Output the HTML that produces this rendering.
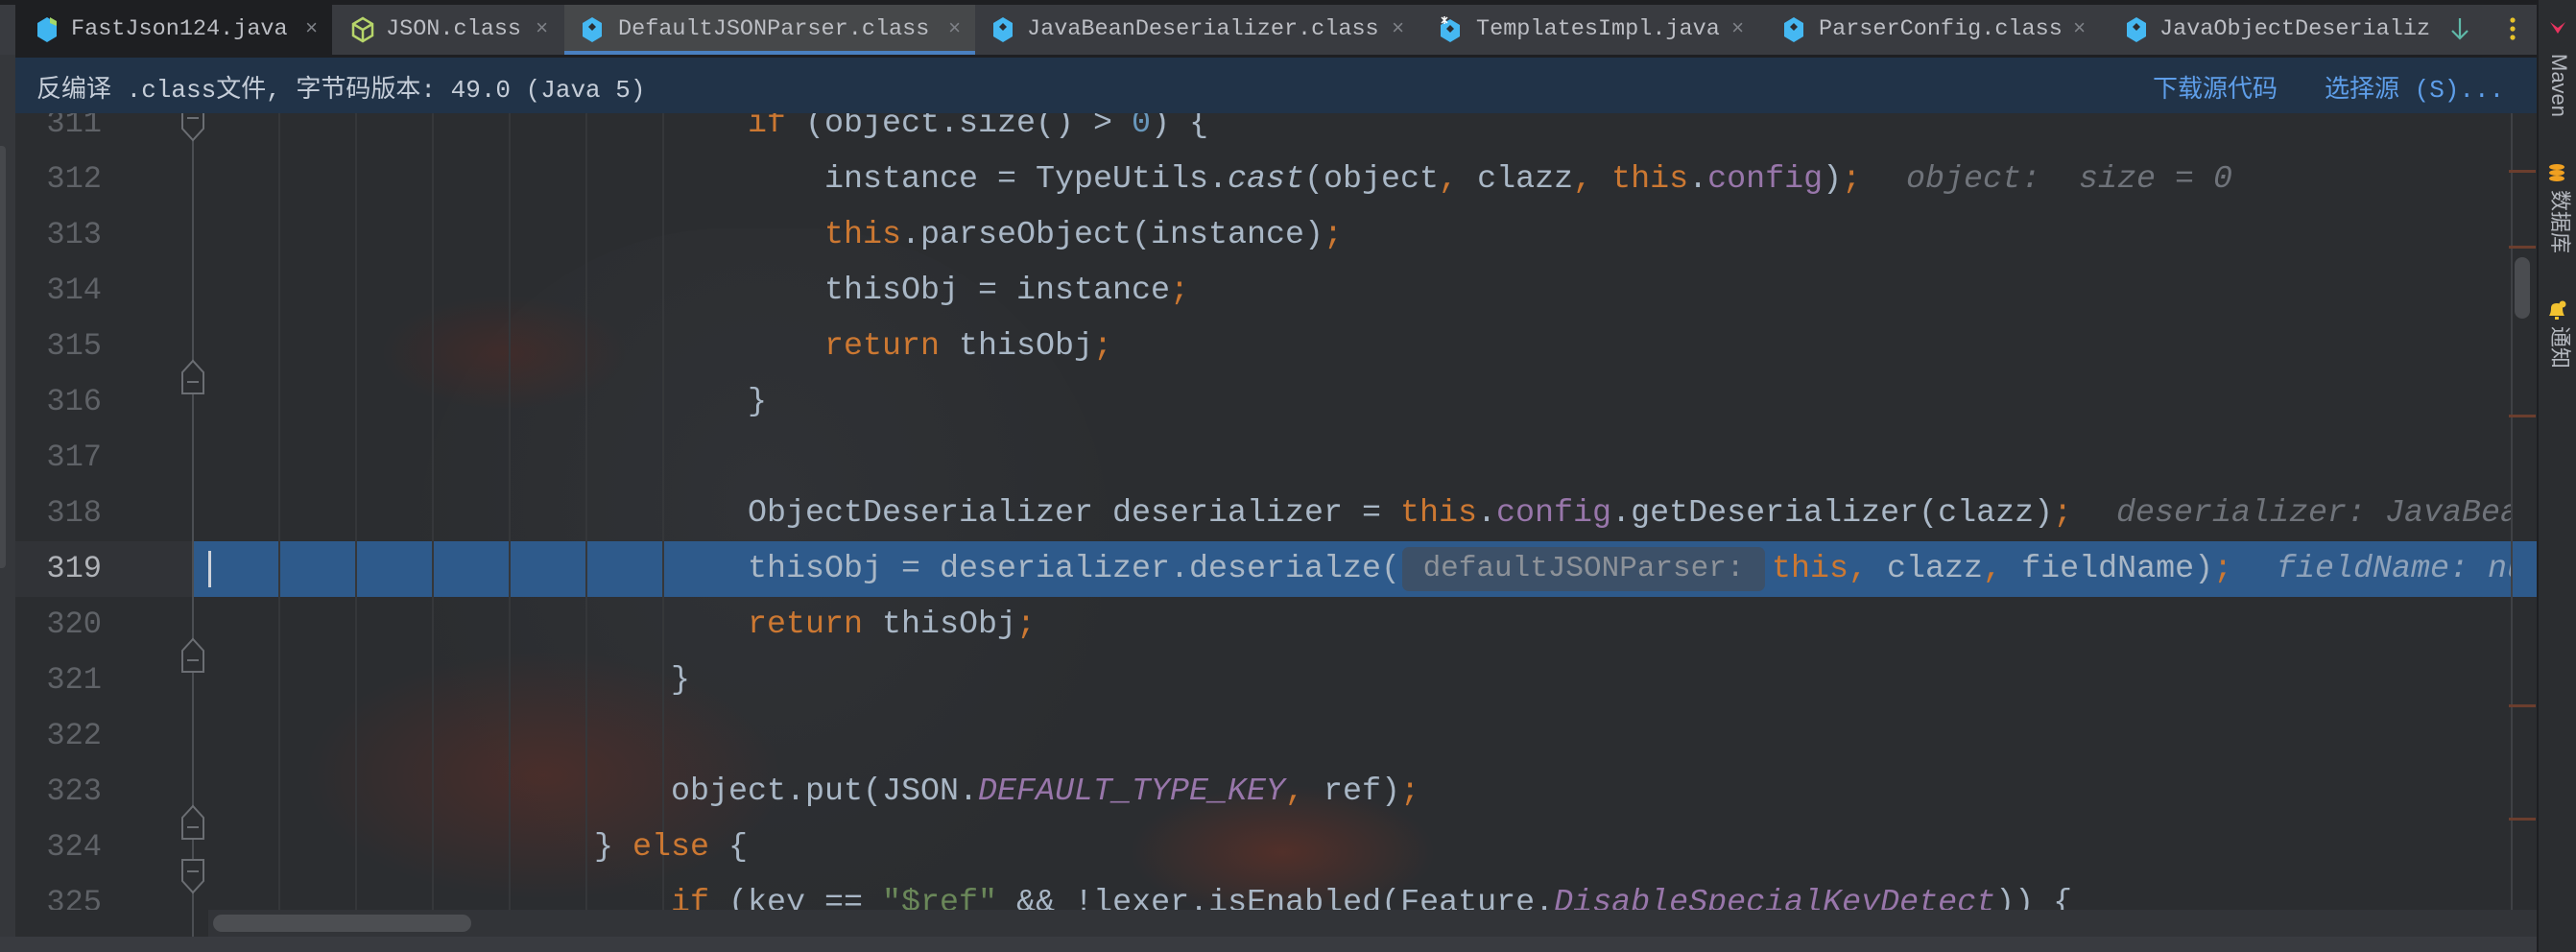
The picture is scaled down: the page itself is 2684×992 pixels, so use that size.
<!DOCTYPE html>
<html><head><meta charset="utf-8"><style>
*{margin:0;padding:0;box-sizing:border-box}
body{width:2684px;height:992px;overflow:hidden;background:#2b2d30;position:relative;font-family:"Liberation Mono","Noto Sans CJK SC",monospace}
.abs{position:absolute}
#topline{left:0;top:0;width:2684px;height:5px;background:#1e1f22}
#tabs{left:0;top:5px;width:2643px;height:52px;background:#393b40}
.tab{position:absolute;top:0;height:52px;font-size:23.5px;color:#bcbec4;line-height:52px;white-space:nowrap}
.tab svg{position:absolute;top:12px}
.tab .t{position:absolute;top:0}
.tab .x{position:absolute;top:0;color:#7f8288;font-size:22px}
#banner{left:16px;top:57px;width:2627px;height:61px;background:#213348;border-top:3px solid #1e1f22}
#banner .l{position:absolute;left:22px;top:12px;font-size:26px;color:#c5cdd8}
#banner .r{position:absolute;top:12px;font-size:26px;color:#5e9ee9}
#leftstrip{left:0;top:57px;width:16px;height:935px;background:#35373b}
#editor{left:16px;top:118px;width:2627px;height:830px;background:#2b2d30;overflow:hidden}
.ln{position:absolute;left:0;width:90px;text-align:right;font-size:32px;color:#5f6267;height:58px;line-height:58px}
.code{position:absolute;left:283px;font-size:33.33px;color:#a9b7c6;height:58px;line-height:58px;white-space:pre}
.k{color:#cc7832}.f{color:#9876aa}.s{color:#6a8759}.i{font-style:italic}
.h{position:absolute;font-style:italic;color:#6f737a;font-size:33.33px;line-height:58px;white-space:pre}
.guide{position:absolute;top:0;width:2px;height:830px;background:#35373a}
#sidebar{left:2643px;top:0;width:41px;height:992px;background:#2b2d30;border-left:2px solid #1e1f22}
.vt{position:absolute;left:8px;writing-mode:vertical-rl;text-orientation:sideways;font-size:22px;color:#b4b8bf;font-family:"Liberation Sans","Noto Sans CJK SC",sans-serif}
</style></head><body>
<div id="topline" class="abs"></div>
<div id="tabs" class="abs">
 <div class="abs" style="left:16px;top:0;width:330px;height:52px;background:#1e1f22"></div>
 <div class="abs" style="left:588px;top:0;width:428px;height:52px;background:#46484a"></div>
 <div class="abs" style="left:588px;top:48px;width:428px;height:4px;background:#4a80c0"></div>
 <div class="tab" style="left:0"><svg style="left:38px" width="22" height="28" viewBox="0 0 22 28"><path d="M11 1 L21 7 V21 L11 27 L1 21 V7Z" fill="#3fb5f0"/><path d="M14 1 L21 5 V10 L14 7Z" fill="#a5d86a"/></svg><span class="t" style="left:74px">FastJson124.java</span><span class="x" style="left:318px">×</span></div>
 <div class="tab" style="left:0"><svg style="left:366px" width="24" height="28" viewBox="0 0 24 28"><path d="M12 2 L22 8 V20 L12 26 L2 20 V8Z M2 8 L12 14 L22 8 M12 14 V26" fill="none" stroke="#b7d56a" stroke-width="2.5"/></svg><span class="t" style="left:402px">JSON.class</span><span class="x" style="left:558px">×</span></div>
 <div class="tab" style="left:0"><svg style="left:606px" width="22" height="28" viewBox="0 0 22 28"><path d="M11 1 L21 7 V21 L11 27 L1 21 V7Z" fill="#45b8f2"/><path d="M11 7 L15 11 L11 15 L7 11Z" fill="#2b2d30"/></svg><span class="t" style="left:644px">DefaultJSONParser.class</span><span class="x" style="left:988px">×</span></div>
 <div class="tab" style="left:0"><svg style="left:1034px" width="22" height="28" viewBox="0 0 22 28"><path d="M11 1 L21 7 V21 L11 27 L1 21 V7Z" fill="#45b8f2"/><path d="M11 7 L15 11 L11 15 L7 11Z" fill="#2b2d30"/></svg><span class="t" style="left:1070px">JavaBeanDeserializer.class</span><span class="x" style="left:1450px">×</span></div>
 <div class="tab" style="left:0"><svg style="left:1500px" width="22" height="28" viewBox="0 0 22 28"><path d="M11 3 L21 9 V21 L11 27 L1 21 V9Z" fill="#45b8f2"/><path d="M11 9 L15 13 L11 17 L7 13Z" fill="#2b2d30"/><path d="M2 1 L8 7 M8 1 L2 7 M5 0 V8" stroke="#fff" stroke-width="1.5"/></svg><span class="t" style="left:1538px">TemplatesImpl.java</span><span class="x" style="left:1804px">×</span></div>
 <div class="tab" style="left:0"><svg style="left:1858px" width="22" height="28" viewBox="0 0 22 28"><path d="M11 1 L21 7 V21 L11 27 L1 21 V7Z" fill="#45b8f2"/><path d="M11 7 L15 11 L11 15 L7 11Z" fill="#2b2d30"/></svg><span class="t" style="left:1895px">ParserConfig.class</span><span class="x" style="left:2160px">×</span></div>
 <div class="tab" style="left:0"><svg style="left:2215px" width="22" height="28" viewBox="0 0 22 28"><path d="M11 1 L21 7 V21 L11 27 L1 21 V7Z" fill="#45b8f2"/><path d="M11 7 L15 11 L11 15 L7 11Z" fill="#2b2d30"/></svg><span class="t" style="left:2250px;width:282px;overflow:hidden">JavaObjectDeserializ</span></div>
 <svg class="abs" style="left:2553px;top:12px" width="20" height="26" viewBox="0 0 20 26"><path d="M10 2 V23 M2 15 L10 23 L18 15" fill="none" stroke="#5fb8a8" stroke-width="2.2"/></svg>
 <svg class="abs" style="left:2614px;top:12px" width="8" height="26" viewBox="0 0 8 26"><circle cx="4" cy="4" r="2.6" fill="#e8c32a"/><circle cx="4" cy="13" r="2.6" fill="#e8c32a"/><circle cx="4" cy="22" r="2.6" fill="#e8c32a"/></svg>
</div>
<div id="leftstrip" class="abs"><div class="abs" style="left:0;top:95px;width:6px;height:440px;background:#46484c;border-radius:0 4px 4px 0"></div></div>
<div id="banner" class="abs"><span class="l">反编译 .class文件, 字节码版本: 49.0 (Java 5)</span><span class="r" style="left:2227px">下载源代码</span><span class="r" style="left:2406px">选择源 (S)...</span></div>
<div id="editor" class="abs">
 <div class="abs" style="left:420px;top:120px;width:720px;height:720px;border-radius:45% 45% 10% 10%;background:radial-gradient(ellipse at 50% 40%,#303236 0%,#2c2e31 60%,rgba(43,45,48,0) 75%)"></div>
 <div class="abs" style="left:300px;top:560px;width:500px;height:260px;background:radial-gradient(ellipse at center,rgba(110,45,35,0.45) 0%,rgba(43,45,48,0) 70%)"></div>
 <div class="abs" style="left:1160px;top:700px;width:320px;height:140px;background:radial-gradient(ellipse at center,rgba(120,50,35,0.5) 0%,rgba(43,45,48,0) 70%)"></div>
 <div class="abs" style="left:380px;top:190px;width:260px;height:120px;background:radial-gradient(ellipse at center,rgba(100,40,30,0.35) 0%,rgba(43,45,48,0) 70%)"></div>
 <div class="abs" style="left:185px;top:446px;width:2442px;height:58px;background:#2e5a8b"></div>
 <div class="abs" style="left:0;top:446px;width:185px;height:58px;background:#313337"></div>
 <div class="guide" style="left:274px"></div><div class="guide" style="left:354px"></div><div class="guide" style="left:434px"></div><div class="guide" style="left:514px"></div><div class="guide" style="left:594px"></div><div class="guide" style="left:674px"></div>
 <div class="abs" style="left:184px;top:0;width:2px;height:830px;background:#4b4e53"></div>
 <div class="abs" style="left:2600px;top:0;width:2px;height:830px;background:#3f4145"></div>
 <div class="abs" style="left:201px;top:456px;width:3px;height:38px;background:#cfd3da"></div>
 <div class="ln" style="top:-18px">311</div><div class="ln" style="top:40px">312</div><div class="ln" style="top:98px">313</div><div class="ln" style="top:156px">314</div><div class="ln" style="top:214px">315</div><div class="ln" style="top:272px">316</div><div class="ln" style="top:330px">317</div><div class="ln" style="top:388px">318</div><div class="ln" style="top:446px;color:#b0b3b8">319</div><div class="ln" style="top:504px">320</div><div class="ln" style="top:562px">321</div><div class="ln" style="top:620px">322</div><div class="ln" style="top:678px">323</div><div class="ln" style="top:736px">324</div><div class="ln" style="top:794px">325</div>
 <svg class="abs" style="left:0;top:0" width="200" height="830"><g fill="#2b2d30" stroke="#6b6e73" stroke-width="2"><path d="M174 -6 H196 V16 L185 28 L174 16Z"/><path d="M174 292 H196 V270 L185 258 L174 270Z"/><path d="M174 582 H196 V560 L185 548 L174 560Z"/><path d="M174 756 H196 V734 L185 722 L174 734Z"/><path d="M174 778 H196 V800 L185 812 L174 800Z"/></g><g stroke="#6b6e73" stroke-width="2"><path d="M179 5 H191 M179 280 H191 M179 570 H191 M179 744 H191 M179 790 H191"/></g></svg>
 <div class="code" style="top:-18px">                        <span class="k">if</span> (object.size() &gt; <span style="color:#6897bb">0</span>) {</div>
 <div class="code" style="top:40px">                            instance = TypeUtils.<span class="i">cast</span>(object<span class="k">,</span> clazz<span class="k">,</span> <span class="k">this</span>.<span class="f">config</span>)<span class="k">;</span></div>
 <div class="h" style="left:1970px;top:40px">object:  size = 0</div>
 <div class="code" style="top:98px">                            <span class="k">this</span>.parseObject(instance)<span class="k">;</span></div>
 <div class="code" style="top:156px">                            thisObj = instance<span class="k">;</span></div>
 <div class="code" style="top:214px">                            <span class="k">return</span> thisObj<span class="k">;</span></div>
 <div class="code" style="top:272px">                        }</div>
 <div class="code" style="top:388px">                        ObjectDeserializer deserializer = <span class="k">this</span>.<span class="f">config</span>.getDeserializer(clazz)<span class="k">;</span></div>
 <div class="h" style="left:2189px;top:388px;width:411px;overflow:hidden">deserializer: JavaBean</div>
 <div class="code" style="top:446px">                        thisObj = deserializer.deserialze(<span style="display:inline-block;vertical-align:top;margin-top:6px;width:378px;height:46px;margin-left:2px;margin-right:7px;background:#3c5068;border-radius:7px;font-size:31px;line-height:46px;color:#8d9299;text-align:center">defaultJSONParser:</span><span class="k">this,</span> clazz<span class="k">,</span> fieldName)<span class="k">;</span></div>
 <div class="h" style="left:2356px;top:446px;width:244px;overflow:hidden;color:#8ea2ba">fieldName: null</div>
 <div class="code" style="top:504px">                        <span class="k">return</span> thisObj<span class="k">;</span></div>
 <div class="code" style="top:562px">                    }</div>
 <div class="code" style="top:678px">                    object.put(JSON.<span class="f i">DEFAULT_TYPE_KEY</span><span class="k">,</span> ref)<span class="k">;</span></div>
 <div class="code" style="top:736px">                } <span class="k">else</span> {</div>
 <div class="code" style="top:794px">                    <span class="k">if</span> (key == <span class="s">"$ref"</span> &amp;&amp; !lexer.isEnabled(Feature.<span class="f i">DisableSpecialKeyDetect</span>)) {</div>
 <div class="abs" style="left:2598px;top:59px;width:28px;height:3px;background:#6b3e2e"></div>
 <div class="abs" style="left:2598px;top:138px;width:28px;height:3px;background:#6b3e2e"></div>
 <div class="abs" style="left:2598px;top:314px;width:28px;height:3px;background:#6b3e2e"></div>
 <div class="abs" style="left:2598px;top:616px;width:28px;height:3px;background:#6b3e2e"></div>
 <div class="abs" style="left:2598px;top:734px;width:28px;height:3px;background:#6b3e2e"></div>
 <div class="abs" style="left:2604px;top:150px;width:16px;height:64px;background:#4a4c50;border-radius:8px"></div>
</div>
<div class="abs" style="left:16px;top:948px;width:2627px;height:28px;background:#2b2d30"></div>
<div class="abs" style="left:217px;top:948px;width:2426px;height:28px;background:#323438"></div>
<div class="abs" style="left:222px;top:953px;width:269px;height:18px;background:#4c4e52;border-radius:9px"></div>
<div class="abs" style="left:200px;top:948px;width:2px;height:28px;background:#4b4e53"></div>
<div class="abs" style="left:0;top:976px;width:2643px;height:16px;background:#393b40"></div>
<div id="sidebar" class="abs">
 <svg class="abs" style="left:10px;top:20px" width="20" height="18" viewBox="0 0 20 18"><path d="M2 3 L10 15 L18 3 L10 9Z" fill="#e8335f"/></svg>
 <div class="vt" style="top:56px">Maven</div>
 <svg class="abs" style="left:10px;top:170px" width="18" height="20" viewBox="0 0 18 20"><ellipse cx="9" cy="4" rx="8" ry="3" fill="#f0a020"/><ellipse cx="9" cy="10" rx="8" ry="3" fill="#f0a020"/><ellipse cx="9" cy="16" rx="8" ry="3" fill="#f0a020"/></svg>
 <div class="vt" style="top:198px">数据库</div>
 <svg class="abs" style="left:8px;top:312px" width="22" height="22" viewBox="0 0 22 22"><path d="M3 17 Q5 14 5 9 Q5 4 11 4 Q17 4 17 9 Q17 14 19 17Z" fill="#f2c230"/><circle cx="17" cy="5" r="3.5" fill="#f2c230"/><rect x="9" y="18" width="4" height="3" fill="#f2c230"/></svg>
 <div class="vt" style="top:340px">通知</div>
</div>
</body></html>
